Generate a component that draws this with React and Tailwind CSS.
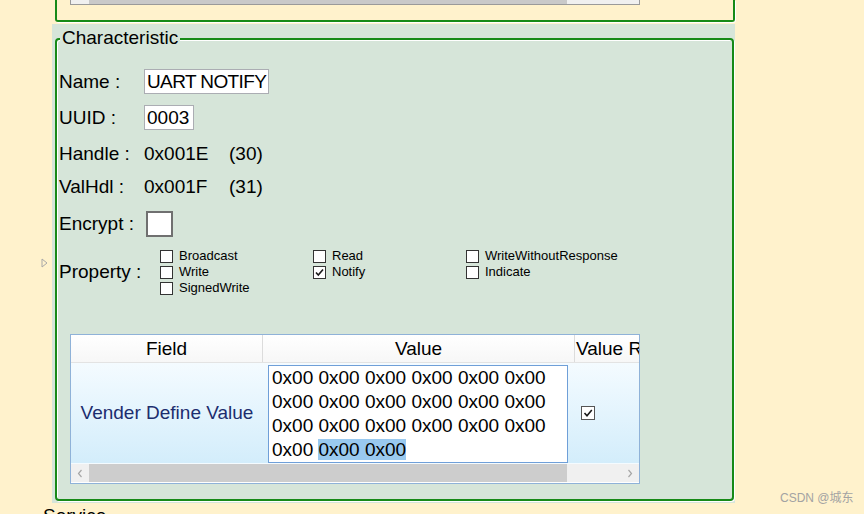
import React from "react";

function SmallCheck({ checked, label }) {
  return (
    <div className="flex items-center h-[16px]">
      <div className="w-[13px] h-[13px] border border-[#333333] bg-white flex items-center justify-center shrink-0">
        {checked && (
          <svg width="11" height="11" viewBox="0 0 11 11">
            <path d="M2 5.5 L4.3 8 L9 2.5" fill="none" stroke="#1a1a1a" strokeWidth="1.6" />
          </svg>
        )}
      </div>
      <span className="ml-[6px] text-[13px] leading-[16px] whitespace-nowrap">{label}</span>
    </div>
  );
}

function Chevron({ dir }) {
  return (
    <svg width="6" height="9" viewBox="0 0 6 9">
      <path
        d={dir === "left" ? "M4.5 1 L1.5 4.5 L4.5 8" : "M1.5 1 L4.5 4.5 L1.5 8"}
        fill="none"
        stroke="#a6a6a6"
        strokeWidth="1.2"
      />
    </svg>
  );
}

export default function App() {
  return (
    <div className="relative w-[864px] h-[514px] overflow-hidden bg-[#FFF2CC] font-['Liberation_Sans',Arial,sans-serif] text-black">
      {/* previous group box remnant */}
      <div className="ml-[55px] w-[680px] h-[22px] border-x-2 border-b-2 border-[#178a17] rounded-b-[3px] shadow-[1px_1px_0_#ffffff]">
        <div className="ml-[13px] w-[570px] h-[5px] bg-[#f0f0f0] border-x border-b border-[#9a9a9a] flex">
          <div className="ml-[18px] w-[478px] h-full bg-[#c9c9c9]" />
        </div>
      </div>

      {/* left tree triangle */}
      <div className="absolute left-[41px] top-[258px]">
        <svg width="7" height="10" viewBox="0 0 7 10">
          <path d="M1 1 L6 5 L1 9 Z" fill="none" stroke="#a8a8a8" strokeWidth="1" />
        </svg>
      </div>

      {/* characteristic panel */}
      <div className="mt-[2px] ml-[52px] w-[683px] h-[479px] bg-[#D6E5D9] pt-[14px] pl-[3px]">
        <div className="relative w-[679px] h-[463px] border-2 border-[#178a17] rounded-[4px] shadow-[1px_1px_0_#ffffff,inset_1px_1px_0_#ffffff]">
          <span className="absolute left-[3px] top-[-13px] px-[2px] bg-[#D6E5D9] text-[19px] leading-[22px]">
            Characteristic
          </span>

          <div className="pl-[2px] pt-[29px] flex flex-col text-[19px]">
            <div className="flex items-center h-[25px]">
              <span className="w-[85px] leading-[22px]">Name :</span>
              <div className="w-[125px] h-[25px] border border-[#ABADB3] bg-white px-[2px] flex items-center leading-[22px] whitespace-nowrap tracking-[-0.6px]">
                UART NOTIFY
              </div>
            </div>
            <div className="flex items-center h-[25px] mt-[11px]">
              <span className="w-[85px] leading-[22px]">UUID :</span>
              <div className="w-[50px] h-[25px] border border-[#ABADB3] bg-white px-[2px] flex items-center leading-[22px]">
                0003
              </div>
            </div>
            <div className="flex items-center h-[24px] mt-[12px]">
              <span className="w-[85px] leading-[22px]">Handle :</span>
              <span className="w-[85px] leading-[22px]">0x001E</span>
              <span className="leading-[22px]">(30)</span>
            </div>
            <div className="flex items-center h-[24px] mt-[9px]">
              <span className="w-[85px] leading-[22px]">ValHdl :</span>
              <span className="w-[85px] leading-[22px]">0x001F</span>
              <span className="leading-[22px]">(31)</span>
            </div>
            <div className="flex items-center h-[26px] mt-[12px]">
              <span className="w-[87px] leading-[22px]">Encrypt :</span>
              <div className="w-[27px] h-[26px] border-2 border-[#707070] bg-white" />
            </div>
            <div className="flex items-center mt-[11px]">
              <span className="w-[101px] leading-[22px]">Property :</span>
              <div className="flex">
                <div className="w-[153px] flex flex-col">
                  <SmallCheck label="Broadcast" />
                  <SmallCheck label="Write" />
                  <SmallCheck label="SignedWrite" />
                </div>
                <div className="w-[153px] flex flex-col self-start">
                  <SmallCheck label="Read" />
                  <SmallCheck label="Notify" checked />
                </div>
                <div className="w-[160px] flex flex-col self-start">
                  <SmallCheck label="WriteWithoutResponse" />
                  <SmallCheck label="Indicate" />
                </div>
              </div>
            </div>

            {/* table */}
            <div className="ml-[11px] mt-[38px] w-[570px] h-[150px] border border-[#8fb2d8] bg-white flex flex-col overflow-hidden">
              <div className="flex h-[28px] bg-gradient-to-b from-white to-[#f7f7f7] border-b border-[#e3e3e3] text-[19px] leading-[22px]">
                <div className="w-[192px] border-r border-[#dcdcdc] flex items-center justify-center">Field</div>
                <div className="w-[312px] border-r border-[#dcdcdc] flex items-center justify-center">Value</div>
                <div className="flex-1 flex items-center pl-[1px] whitespace-nowrap overflow-hidden">Value R</div>
              </div>
              <div className="flex h-[101px] bg-gradient-to-b from-[#f4fbff] to-[#d3edfb] border-b border-[#f4fbff]">
                <div className="w-[192px] flex items-center justify-center text-[19px] leading-[22px] text-[#1c2d6e] whitespace-nowrap">
                  Vender Define Value
                </div>
                <div className="w-[312px] pl-[5px] pt-[2px]">
                  <div className="w-[300px] h-[98px] border border-[#6f9fd8] bg-white pl-[3px] text-[19px] leading-[24px] whitespace-nowrap">
                    <div>0x00 0x00 0x00 0x00 0x00 0x00</div>
                    <div>0x00 0x00 0x00 0x00 0x00 0x00</div>
                    <div>0x00 0x00 0x00 0x00 0x00 0x00</div>
                    <div>
                      0x00 <span className="bg-[#99c9ef]">0x00 0x00</span>
                    </div>
                  </div>
                </div>
                <div className="flex-1 flex items-center pl-[6px]">
                  <div className="w-[14px] h-[14px] border border-[#555555] bg-white flex items-center justify-center">
                    <svg width="12" height="12" viewBox="0 0 12 12">
                      <path d="M2.5 6 L5 8.8 L9.8 3" fill="none" stroke="#1a1a1a" strokeWidth="1.6" />
                    </svg>
                  </div>
                </div>
              </div>
              <div className="flex h-[18px] bg-[#f0f0f0]">
                <div className="w-[18px] flex items-center justify-center">
                  <Chevron dir="left" />
                </div>
                <div className="w-[478px] bg-[#cdcdcd]" />
                <div className="flex-1 flex items-center justify-end pr-[6px]">
                  <Chevron dir="right" />
                </div>
              </div>
            </div>
          </div>
        </div>
      </div>

      <div className="ml-[43px] mt-[3px] text-[19px] leading-[19px]">Service</div>

      <div className="absolute left-[780px] top-[490px] text-[12px] leading-[16px] text-[#a3a3a3] font-['Liberation_Sans','Noto_Sans_CJK_SC',sans-serif]">
        CSDN @城东
      </div>
    </div>
  );
}
